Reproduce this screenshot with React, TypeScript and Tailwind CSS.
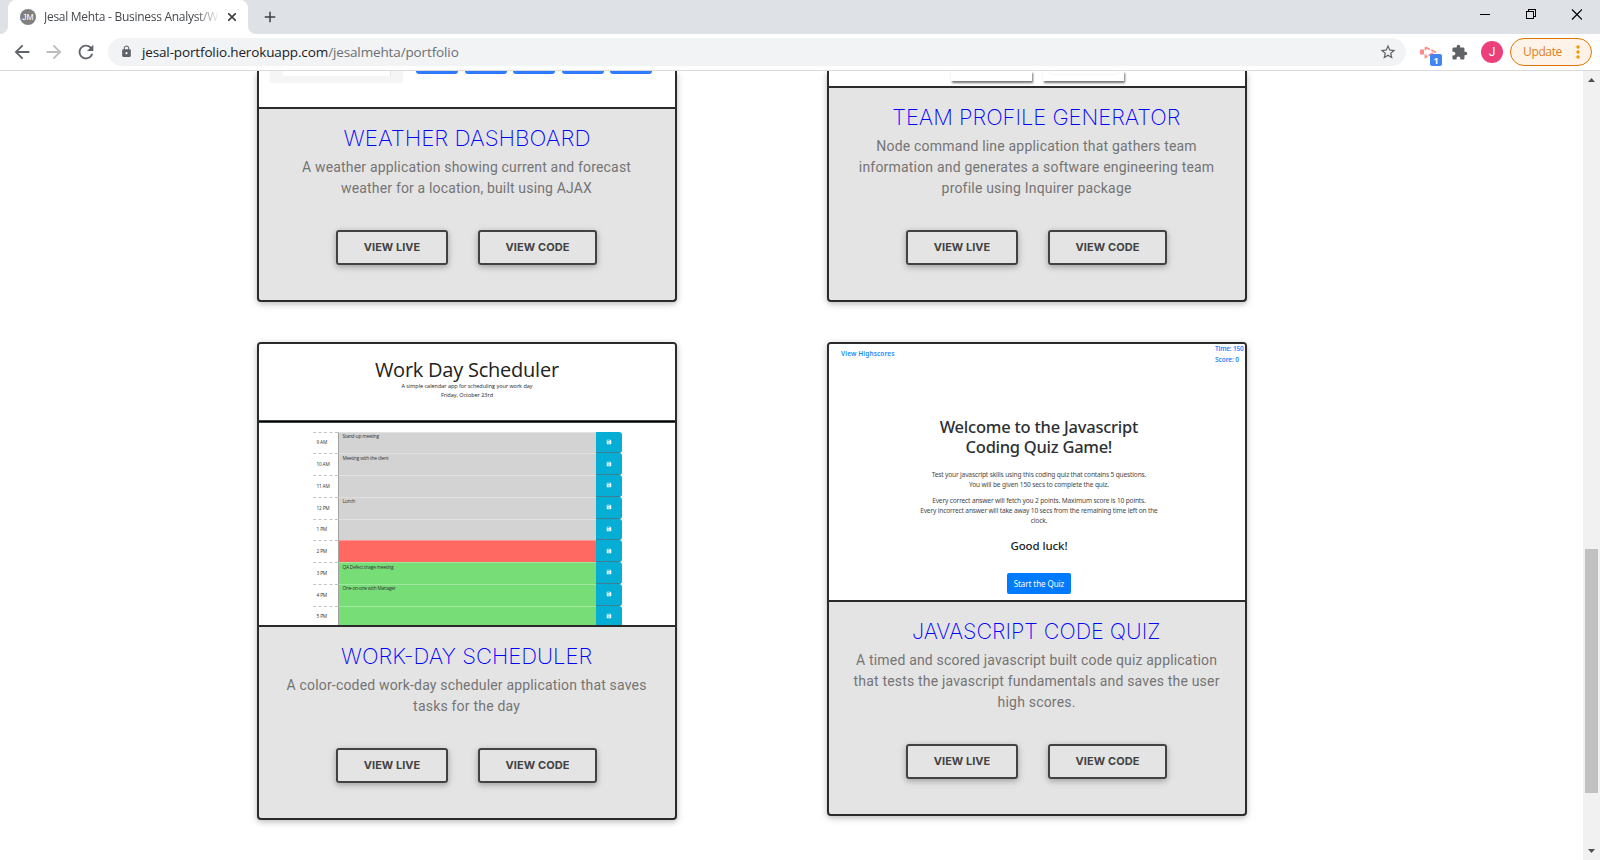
import { useLayoutEffect, useRef, useState, type ReactNode } from "react";
import {
  MdAdd,
  MdArrowBack,
  MdArrowForward,
  MdExtension,
  MdLock,
  MdRefresh,
  MdSave,
  MdStarBorder,
} from "react-icons/md";

/** One line of text whose tracking is adjusted so that it fills a given width. */
function Line({ children, width, className = "" }: { children: string; width: number; className?: string }) {
  const ref = useRef<HTMLSpanElement>(null);
  const [tracking, setTracking] = useState(0);
  useLayoutEffect(() => {
    if (!ref.current) return;
    const natural = ref.current.getBoundingClientRect().width;
    setTracking((width - natural) / children.length);
  }, [width, children]);
  return (
    <span
      ref={ref}
      className={`inline-block whitespace-pre ${className}`}
      style={{ letterSpacing: tracking, marginRight: -tracking }}
    >
      {children}
    </span>
  );
}

/** A heading whose letters are widened to fill a given width. */
function WideLine({ children, width }: { children: string; width: number }) {
  const ref = useRef<HTMLSpanElement>(null);
  const [scale, setScale] = useState(1);
  useLayoutEffect(() => {
    if (ref.current) setScale(width / ref.current.offsetWidth);
  }, [width, children]);
  return (
    <span
      ref={ref}
      className="inline-block whitespace-pre"
      style={{ transform: `translateY(0.4px) scaleX(${scale})` }}
    >
      {children}
    </span>
  );
}

type TextLine = [text: string, width: number];

function OutlineButton({ label, textWidth, className }: { label: string; textWidth: number; className: string }) {
  return (
    <button
      className={`flex h-[35px] items-center justify-center rounded-[3px] border-2 border-[#424242] font-['Inter',sans-serif] text-[11px] leading-none font-bold text-[#424242] shadow-[0_2px_5px_rgba(0,0,0,0.2),0_2px_10px_rgba(0,0,0,0.12)] ${className}`}
    >
      <Line width={textWidth}>{label}</Line>
    </button>
  );
}

function ProjectCard({
  title,
  lines,
  clipped = false,
  children,
}: {
  title: TextLine;
  lines: TextLine[];
  clipped?: boolean;
  children: ReactNode;
}) {
  return (
    <article
      className={`w-[420px] overflow-hidden border-2 border-[#2b2b2b] bg-[#e4e4e4] shadow-[0_2px_5px_rgba(0,0,0,0.16),0_2px_10px_rgba(0,0,0,0.12)] ${
        clipped ? "rounded-b-[4px] border-t-0" : "rounded-[4px]"
      }`}
    >
      <div className="overflow-hidden border-b-2 border-[#2b2b2b] bg-white">{children}</div>
      <div className="flex flex-col items-center pb-[35px]">
        <h4 className="flex h-12 items-center pt-[11px] pr-px font-['Inter',sans-serif] text-[21px] leading-none font-[220] text-[#0000ff]">
          <WideLine width={title[1]}>{title[0]}</WideLine>
        </h4>
        <p className="flex flex-col items-center pr-px font-['Roboto',sans-serif] text-[14px] leading-[21px] text-[#747474]">
          {lines.map(([text, width]) => (
            <Line key={text} width={width}>
              {text}
            </Line>
          ))}
        </p>
        <div className="mt-[31px] flex w-full gap-[30px] pl-[77px]">
          <OutlineButton label="VIEW LIVE" textWidth={56.5} className="w-[112px]" />
          <OutlineButton label="VIEW CODE" textWidth={64} className="w-[119px]" />
        </div>
      </div>
    </article>
  );
}

function WeatherPreview() {
  return (
    <div className="flex h-9 items-start pl-[11px]">
      <div className="h-3 w-[133px] bg-[#f5f5f5] pl-[13px]">
        <div className="h-[5px] w-[108px] border-r border-[#e6e6e6] bg-white" />
      </div>
      <div className="ml-[13px] flex gap-[6.5px]">
        {[0, 1, 2, 3, 4].map((i) => (
          <div key={i} className="h-[3px] w-[42px] rounded-b-[3px] bg-[#2f7bff]" />
        ))}
      </div>
    </div>
  );
}

function TeamPreview() {
  return (
    <div className="flex h-[15px] items-start gap-[11px] pl-[122px]">
      <div className="h-[10px] w-[81px] bg-white shadow-[1px_2px_2px_rgba(0,0,0,0.55)]" />
      <div className="h-[10px] w-[81px] bg-white px-[5px] shadow-[1px_2px_2px_rgba(0,0,0,0.55)]">
        <div className="h-1 rounded-b-sm border border-t-0 border-[#f8f8f8]" />
      </div>
    </div>
  );
}

const slots: { time: string; timeWidth: number; note?: TextLine; tone: string }[] = [
  { time: "9 AM", timeWidth: 10.5, note: ["Stand-up meeting", 36.5], tone: "bg-[#d3d3d3]" },
  { time: "10 AM", timeWidth: 13, note: ["Meeting with the client", 46], tone: "bg-[#d3d3d3]" },
  { time: "11 AM", timeWidth: 13, tone: "bg-[#d3d3d3]" },
  { time: "12 PM", timeWidth: 13, note: ["Lunch", 12.5], tone: "bg-[#d3d3d3]" },
  { time: "1 PM", timeWidth: 10.5, tone: "bg-[#d3d3d3]" },
  { time: "2 PM", timeWidth: 10.5, tone: "bg-[#ff6961]" },
  { time: "3 PM", timeWidth: 10.5, note: ["QA Defect triage meeting", 51], tone: "bg-[#77dd77]" },
  { time: "4 PM", timeWidth: 10.5, note: ["One-on-one with Manager", 53], tone: "bg-[#77dd77]" },
  { time: "5 PM", timeWidth: 10.5, tone: "bg-[#77dd77]" },
];

function SchedulerPreview() {
  return (
    <div className="h-[281px] overflow-hidden font-['Open_Sans','Noto_Sans',sans-serif] text-[#222]">
      <div className="flex h-[76px] flex-col items-center pt-[13px]">
        <Line width={184} className="text-[20px] leading-[25px]">
          Work Day Scheduler
        </Line>
        <Line width={131} className="text-[5.5px] leading-[8px]">
          A simple calendar app for scheduling your work day
        </Line>
        <Line width={52} className="text-[5.5px] leading-[10px]">
          Friday, October 23rd
        </Line>
      </div>
      <div className="h-[3px] border-y border-[#3c4643] bg-black" />
      <div className="flex flex-col px-[53.5px] pt-[8.5px]">
        {slots.map((slot) => (
          <div key={slot.time} className="flex h-[21.75px]">
            <div className="flex w-[25px] items-center border-t border-dashed border-[#c4c4c4] pl-1 text-[4.8px] leading-none text-[#333]">
              <Line width={slot.timeWidth}>{slot.time}</Line>
            </div>
            <div
              className={`w-[258px] border-t border-l border-t-white/30 border-l-[#a0a0a0] pt-[0.5px] pl-[4px] text-[4.8px] leading-[6px] text-[#333] ${slot.tone}`}
            >
              {slot.note && <Line width={slot.note[1]}>{slot.note[0]}</Line>}
            </div>
            <div className="flex w-[26px] items-center justify-center rounded-r-[3px] border-b border-[#3c7f92] bg-[#06aed5]">
              <MdSave className="size-[6px] text-white" />
            </div>
          </div>
        ))}
      </div>
    </div>
  );
}

function QuizPreview() {
  return (
    <div className="h-[256px] overflow-hidden font-['Noto_Sans','Open_Sans',sans-serif] text-[#212529]">
      <div className="flex h-[73px] justify-between pl-3 text-[6.5px] leading-[11px] font-semibold text-[#2187ff]">
        <Line width={53.5} className="pt-1">
          View Highscores
        </Line>
        <div className="flex w-[30px] flex-col items-start">
          <Line width={28.5} className="-mt-px">
            Time: 150
          </Line>
          <Line width={24}>Score: 0</Line>
        </div>
      </div>
      <div className="flex flex-col items-center pl-1">
        <div className="flex flex-col items-center text-[16.5px] leading-[20px] font-medium text-[#2c3034]">
          <Line width={198.5}>Welcome to the Javascript</Line>
          <Line width={146.5}>Coding Quiz Game!</Line>
        </div>
        <div className="mt-[13px] flex flex-col items-center text-[6.6px] leading-[10px] text-[#45484c]">
          <Line width={214.5}>Test your javascript skills using this coding quiz that contains 5 questions.</Line>
          <Line width={140}>You will be given 150 secs to complete the quiz.</Line>
        </div>
        <div className="mt-[6px] flex flex-col items-center text-[6.6px] leading-[10px] text-[#45484c]">
          <Line width={213.5}>Every correct answer will fetch you 2 points. Maximum score is 10 points.</Line>
          <Line width={237.5}>Every incorrect answer will take away 10 secs from the remaining time left on the</Line>
          <Line width={16.5}>clock.</Line>
        </div>
        <Line width={57} className="mt-3 text-[11.5px] leading-[16px] font-medium">
          Good luck!
        </Line>
        <div className="mt-[19px] flex h-[20.5px] w-16 items-center justify-center rounded-[2px] bg-[#007bff] pt-px text-[8px] leading-none text-white">
          <Line width={50.5}>Start the Quiz</Line>
        </div>
      </div>
    </div>
  );
}

function TabStrip() {
  return (
    <div className="flex h-[34px] bg-[#dee1e6]">
      <svg className="mt-[26px] size-2 shrink-0" viewBox="0 0 8 8">
        <path d="M8 0v8H0a8 8 0 0 0 8-8z" fill="#fff" />
      </svg>
      <div className="flex w-60 items-center rounded-t-lg bg-white pl-3">
        <div className="flex size-4 items-center justify-center rounded-full bg-[#808080] font-['Liberation_Sans',sans-serif] text-[8.5px] leading-none text-white">
          JM
        </div>
        <div className="ml-2 w-[176px] overflow-hidden mask-r-from-86% mask-r-to-100% font-['Open_Sans',sans-serif] text-[12px] leading-4 text-[#45494d]">
          <Line width={174}>Jesal Mehta - Business Analyst/W</Line>
        </div>
        <svg className="ml-2 size-2" viewBox="0 0 8 8" fill="none" stroke="#3c4043" strokeWidth="1.600">
          <path d="M0 0l8 8M8 0l-8 8" />
        </svg>
      </div>
      <svg className="mt-[26px] size-2 shrink-0" viewBox="0 0 8 8">
        <path d="M0 0v8h8a8 8 0 0 1-8-8z" fill="#fff" />
      </svg>
      <MdAdd className="mt-2 ml-[5px] size-[18px] text-[#3c4043]" />
      <div className="ml-auto flex pt-[9px] pr-[18px]">
        <svg width="102" height="11" viewBox="0 0 102 11" fill="none" stroke="#000" shapeRendering="crispEdges">
          <path d="M0 5.500h10M46.500 2.500h7v7h-7zM48.500 2.500v-2h7v7h-2" />
          <path d="M92 .5l10 10M102 .5l-10 10" shapeRendering="auto" strokeWidth="1.200" />
        </svg>
      </div>
    </div>
  );
}

function Toolbar() {
  return (
    <div className="flex h-[37px] items-center border-b border-[#dadada] bg-white pl-[11px] pr-[7px]">
      <MdArrowBack className="size-[22px] text-[#5f6368]" />
      <MdArrowForward className="ml-[10px] size-[22px] text-[#babcbe]" />
      <MdRefresh className="ml-[10px] size-[22px] text-[#5f6368]" />
      <div className="ml-[11px] flex h-7 w-[1298px] items-center rounded-full bg-[#f1f3f4] pl-3 pr-[9px]">
        <MdLock className="mb-px size-[13px] text-[#5f6368]" />
        <div className="ml-[9px] flex font-['Open_Sans',sans-serif] text-[13.5px] leading-5 text-[#202124]">
          <Line width={186}>jesal-portfolio.herokuapp.com</Line>
          <Line width={130.5} className="text-[#6b6f74]">
            /jesalmehta/portfolio
          </Line>
        </div>
        <MdStarBorder className="ml-auto size-[18px] text-[#5f6368]" />
      </div>
      <div className="relative ml-[14px] h-7 w-[22px]">
        <svg className="mt-2" width="17" height="13" viewBox="0 0 17 13">
          <path d="M0 3.500h4v5H0z" fill="#ff8a8a" />
          <path
            d="M5.500 1.200l9.500 4.800-9.500 5.300V8.500M5.500 1.200v3"
            fill="none"
            stroke="#ff8a8a"
            strokeWidth="1.800"
            strokeDasharray="5 1.500"
          />
        </svg>
        <span className="absolute top-4 left-[10px] flex size-3 items-center justify-center rounded-[2px] bg-[#4285f4] font-['Open_Sans',sans-serif] text-[9px] leading-none font-bold text-white">
          1
        </span>
      </div>
      <MdExtension className="ml-[9px] size-[17px] text-[#5f6368]" />
      <div className="ml-[13px] flex size-[22px] items-center justify-center rounded-full bg-[#ec407a] font-['Roboto',sans-serif] text-[12px] leading-none text-white">
        J
      </div>
      <div className="ml-[7px] flex h-7 w-[82px] items-center rounded-full border border-[#e37400] bg-[#fdf3e8] pl-3 font-['Open_Sans',sans-serif] text-[12px] leading-none text-[#e0801a]">
        <Line width={39}>Update</Line>
        <svg className="ml-[14px]" width="4" height="14" viewBox="0 0 4 14" fill="#f29900">
          <circle cx="2" cy="2" r="1.700" />
          <circle cx="2" cy="7" r="1.700" />
          <circle cx="2" cy="12" r="1.700" />
        </svg>
      </div>
    </div>
  );
}

function Scrollbar() {
  return (
    <div className="flex w-[17px] flex-col items-center bg-[#f1f1f1] pt-[7px] pb-[7px]">
      <svg width="7" height="4" viewBox="0 0 7 4" fill="#505050">
        <path d="M0 4l3.500-4L7 4z" />
      </svg>
      <div className="mt-[467px] h-[244px] w-[13px] bg-[#c1c1c1]" />
      <svg className="mt-auto" width="7" height="4" viewBox="0 0 7 4" fill="#505050">
        <path d="M0 0l3.500 4L7 0z" />
      </svg>
    </div>
  );
}

export default function App() {
  return (
    <div className="flex h-[860px] w-[1600px] flex-col overflow-hidden bg-white">
      <TabStrip />
      <Toolbar />
      <div className="flex min-h-0 flex-1">
        <main className="flex flex-1 items-start gap-[150px] overflow-hidden pl-[257px]">
          <div className="flex flex-col gap-10">
            <ProjectCard
              clipped
              title={["WEATHER DASHBOARD", 247]}
              lines={[
                ["A weather application showing current and forecast", 329],
                ["weather for a location, built using AJAX", 251],
              ]}
            >
              <WeatherPreview />
            </ProjectCard>
            <ProjectCard
              title={["WORK-DAY SCHEDULER", 251]}
              lines={[
                ["A color-coded work-day scheduler application that saves", 360],
                ["tasks for the day", 107],
              ]}
            >
              <SchedulerPreview />
            </ProjectCard>
          </div>
          <div className="flex flex-col gap-10">
            <ProjectCard
              clipped
              title={["TEAM PROFILE GENERATOR", 288.5]}
              lines={[
                ["Node command line application that gathers team", 320.5],
                ["information and generates a software engineering team", 355.5],
                ["profile using Inquirer package", 189.5],
              ]}
            >
              <TeamPreview />
            </ProjectCard>
            <ProjectCard
              title={["JAVASCRIPT CODE QUIZ", 248]}
              lines={[
                ["A timed and scored javascript built code quiz application", 361],
                ["that tests the javascript fundamentals and saves the user", 366],
                ["high scores.", 78],
              ]}
            >
              <QuizPreview />
            </ProjectCard>
          </div>
        </main>
        <Scrollbar />
      </div>
    </div>
  );
}
